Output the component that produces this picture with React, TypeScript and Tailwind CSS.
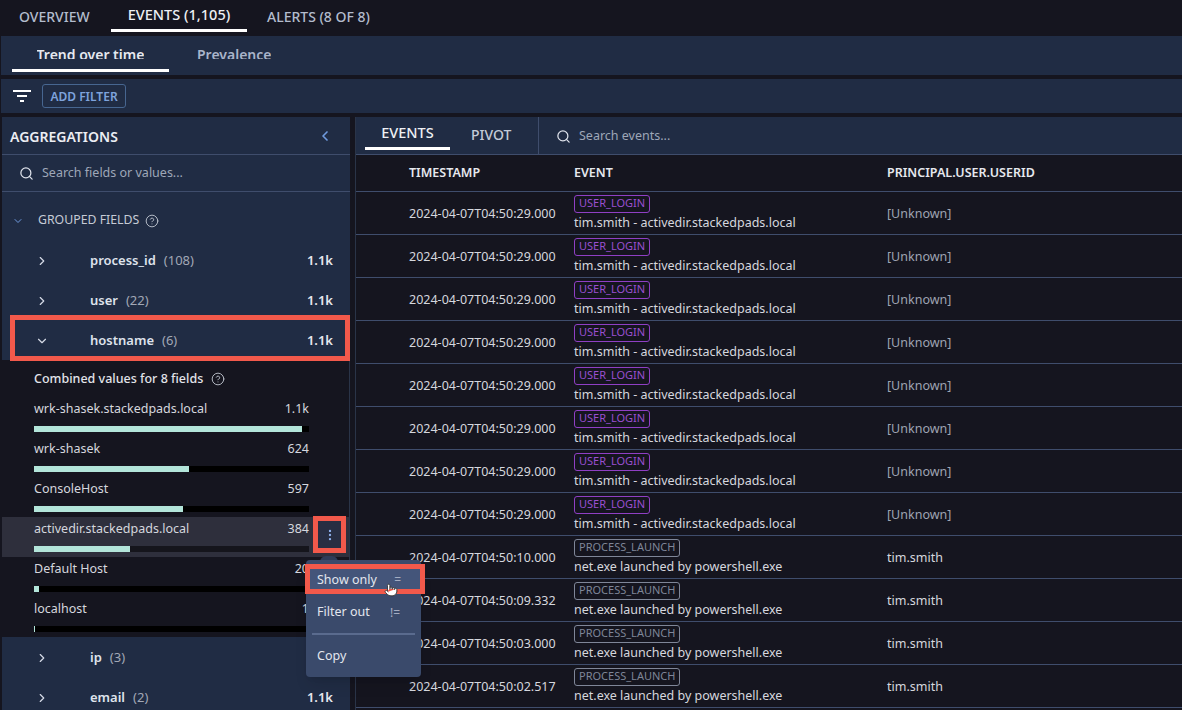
import React from "react";
import { ChevronRight, ChevronDown, ChevronLeft, Search, CircleHelp, EllipsisVertical, Pointer } from "lucide-react";

const font = { fontFamily: '"Noto Sans", sans-serif' };

type FieldProps = { name: string; count: number; open?: boolean; total?: string };
function FieldRow({ name, count, open, total = "1.1k" }: FieldProps) {
  return (
    <div className="flex h-10 items-center pl-[33px] pr-[17px] pt-[1px] text-[13px]">
      <span className="w-[55px] text-[#d5dae6]">
        {open ? <ChevronDown size={14} strokeWidth={2} /> : <ChevronRight size={14} strokeWidth={2} />}
      </span>
      <span className="font-semibold text-[#dfe3ec]">{name}</span>
      <span className="ml-[8px] text-[#a2a8b6]">({count})</span>
      <span className="ml-auto font-semibold text-[#e6e8ee]">{total}</span>
    </div>
  );
}

type ValueProps = { name: string; count: string; pct: number; hover?: boolean };
function ValueRow({ name, count, pct, hover }: ValueProps) {
  return (
    <div className={`h-10 pl-[32px] pr-[40px] pt-[1px] ${hover ? "bg-[#2e2f3c]" : ""}`}>
      <div className="flex h-[28px] items-start justify-between pt-[1px] text-[12.5px] leading-[20px] text-[#d5d7de]">
        <span>{name}</span>
        <span>{count}</span>
      </div>
      <div className={`h-[6px] ${hover ? "bg-[#15151c]" : "bg-black"}`}>
        <div className="h-full bg-[#b3e5da]" style={{ width: `${pct}%` }} />
      </div>
    </div>
  );
}

type EventRow = { ts: string; type: string; text: string; user: string };
const login = "tim.smith - activedir.stackedpads.local";
const launch = "net.exe launched by powershell.exe";
const t = "2024-04-07T04:50:29.000";
const rows: EventRow[] = [
  ...Array.from({ length: 8 }, () => ({ ts: t, type: "USER_LOGIN", text: login, user: "[Unknown]" })),
  { ts: "2024-04-07T04:50:10.000", type: "PROCESS_LAUNCH", text: launch, user: "tim.smith" },
  { ts: "2024-04-07T04:50:09.332", type: "PROCESS_LAUNCH", text: launch, user: "tim.smith" },
  { ts: "2024-04-07T04:50:03.000", type: "PROCESS_LAUNCH", text: launch, user: "tim.smith" },
  { ts: "2024-04-07T04:50:02.517", type: "PROCESS_LAUNCH", text: launch, user: "tim.smith" },
];

export default function App() {
  return (
    <div style={font} className="flex h-[710px] w-[1182px] flex-col overflow-hidden bg-[#15151f] text-white">
      <div className="flex h-9 shrink-0 text-[14px] font-medium">
        <div className="flex h-[32px] w-[111px] items-center pl-[19px] text-[#b3bccd]">OVERVIEW</div>
        <div className="flex h-[32px] w-[136px] items-center justify-center border-b-[3px] border-white pt-[1px] text-[14.5px] text-[#eef0f4]">EVENTS (1,105)</div>
        <div className="flex h-[32px] items-center pl-[20px] text-[#b3bccd]">ALERTS (8 OF 8)</div>
      </div>

      <div className="ml-[1px] flex h-[39px] shrink-0 items-start bg-[#202c44] pl-[11px] text-[14px] font-semibold">
        <div className="flex h-[36px] w-[157px] items-start justify-center overflow-hidden border-b-[3px] border-white pt-[9px] text-[#e6e9f0]">
          <span className="block h-[14px] overflow-hidden leading-[20px]">Trend over time</span>
        </div>
        <div className="ml-[28px] flex h-[36px] items-start overflow-hidden pt-[9px] text-[#a9b4ca]">
          <span className="block h-[14px] overflow-hidden leading-[20px]">Prevalence</span>
        </div>
      </div>

      <div className="ml-[1px] mt-[4px] flex h-[34px] shrink-0 items-center gap-[11px] bg-[#202c44] pl-[12px]">
        <svg width="18" height="14" viewBox="0 0 18 14" fill="none" stroke="#fff" strokeWidth="2">
          <path d="M0 2H18M4 7H14M7 12H11" />
        </svg>
        <div className="flex h-[24px] w-[84px] items-center justify-center rounded-[3px] border border-[#476690] pt-[1px] text-[12px] font-semibold text-[#7ea3dc]">
          ADD FILTER
        </div>
      </div>

      <div className="mt-[4px] flex min-h-0 flex-1">
        <aside className="relative ml-[2px] w-[348px] shrink-0 bg-[#202c44]">
          <div className="flex h-[38px] items-center justify-between border-b border-[#3f4d6c] pl-[8px] pr-[17px] pt-[1px]">
            <span className="text-[14px] font-semibold text-[#eceef3]">AGGREGATIONS</span>
            <ChevronLeft size={16} strokeWidth={2.5} className="text-[#6f9ade]" />
          </div>
          <div className="flex h-[37px] items-center gap-[8px] border-b border-[#3f4d6c] pl-[17px] text-[12.5px] text-[#9ea7b8]">
            <Search size={15} strokeWidth={2} className="text-[#dfe3ec]" />
            <span>Search fields or values...</span>
          </div>
          <div className="flex h-[48px] items-center pl-[10px] pt-[9px] text-[12.3px] text-[#c6cbd6]">
            <ChevronDown size={12} strokeWidth={2} className="mr-[14px] text-[#6f9ade]" />
            <span>GROUPED FIELDS</span>
            <CircleHelp size={14} strokeWidth={1.5} className="ml-[6px] text-[#c6cbd6]" />
          </div>
          <FieldRow name="process_id" count={108} />
          <FieldRow name="user" count={22} />
          <FieldRow name="hostname" count={6} open />
          <div className="h-[277px] border-r border-[#2a3448] bg-[#15151f] pt-[4px]">
            <div className="flex h-[30px] items-center gap-[8px] pl-[32px] text-[12.5px] font-medium text-[#e2e4ea]">
              <span>Combined values for 8 fields</span>
              <CircleHelp size={14} strokeWidth={1.5} className="text-[#c6cbd6]" />
            </div>
            <div className="pt-[3px]">
              <ValueRow name="wrk-shasek.stackedpads.local" count="1.1k" pct={97.5} />
              <ValueRow name="wrk-shasek" count="624" pct={56.5} />
              <ValueRow name="ConsoleHost" count="597" pct={54} />
              <ValueRow name="activedir.stackedpads.local" count="384" pct={34.8} hover />
              <ValueRow name="Default Host" count="20" pct={1.8} />
              <ValueRow name="localhost" count="1" pct={0.4} />
            </div>
          </div>
          <FieldRow name="ip" count={3} />
          <FieldRow name="email" count={2} />

          <div className="absolute left-[8px] top-[198px] h-[46px] w-[340px] border-[5px] border-[#f2594b]" />

          <div className="absolute left-[311px] top-[399px] flex h-[37px] w-[33px] items-center justify-center border-[5px] border-[#f2594b] bg-[#282e42]">
            <EllipsisVertical size={14} strokeWidth={2} className="text-[#8fb0ea]" />
          </div>

          <div className="absolute left-[318px] top-[439px] h-[6px] w-[18px] rounded-t-full bg-[#2f3c58]" />
          <div className="absolute left-[304px] top-[443px] h-[117px] w-[115px] rounded-[4px] bg-[#3a4a6b] text-[12.5px] text-[#e3e6ee] shadow-lg">
            <div className="h-[38px]" />
            <div className="flex h-[28px] items-center justify-between pl-[11px] pr-[21px] pt-[1px]">
              <span>Filter out</span>
              <span className="text-[12px] text-[#a4adc2]">!=</span>
            </div>
            <div className="mx-[6px] mt-[7px] h-[2px] bg-[#5a6b8e]" />
            <div className="flex h-[42px] items-center pl-[11px] pt-[1px]">Copy</div>
          </div>

          <div className="absolute left-[303px] top-[447px] flex h-[30px] w-[120px] items-center justify-between border-[5px] border-[#f2594b] bg-[#44557a] pl-[7px] pr-[19px] pt-[2px] text-[12.5px] text-[#e3e6ee]">
            <span>Show only</span>
            <span className="text-[12px] text-[#a4adc2]">=</span>
          </div>
          <Pointer size={14} strokeWidth={1.5} fill="#fff" className="absolute left-[382px] top-[466px] text-[#333]" />
        </aside>

        <main className="ml-[5px] flex min-w-0 flex-1 flex-col border-l border-[#2a3448]">
          <div className="flex h-[38px] shrink-0 border-b border-[#3f4d6c] bg-[#202c44]">
            <div className="flex w-[183px] border-r border-[#3f4d6c] pl-[9px] text-[14px] font-medium">
              <div className="flex h-[33px] w-[85px] items-center justify-center border-b-[3px] border-white pt-[1px] text-[14.5px] text-[#eef0f4]">EVENTS</div>
              <div className="ml-[21px] flex h-[33px] items-center pt-[1px] text-[#c4cbd9]">PIVOT</div>
            </div>
            <div className="flex items-center gap-[8px] pl-[17px] pt-[1px] text-[12.5px] text-[#9ea7b8]">
              <Search size={15} strokeWidth={2} className="text-[#dfe3ec]" />
              <span>Search events...</span>
            </div>
          </div>
          <div className="flex h-[37px] shrink-0 items-center border-b border-[#3f4d6c] pt-[1px] text-[12.5px] font-semibold text-[#e6e8ee]">
            <span className="ml-[53px] w-[165px]">TIMESTAMP</span>
            <span className="w-[313px]">EVENT</span>
            <span>PRINCIPAL.USER.USERID</span>
          </div>
          {rows.map((r, i) => {
            const isLogin = r.type === "USER_LOGIN";
            return (
              <div key={i} className="flex h-[43px] shrink-0 items-center border-b border-[#3f4d6c] text-[12.5px] text-[#d5d7de]">
                <span className="ml-[53px] w-[165px] pt-[2px]">{r.ts}</span>
                <div className="w-[313px]">
                  <span
                    className={`flex h-[18px] w-fit items-center rounded-[3px] border px-[4px] text-[11px] ${
                      isLogin ? "border-[#8f3fc4] text-[#9a4fd0]" : "border-[#7f8698] text-[#7f8698]"
                    }`}
                  >
                    {r.type}
                  </span>
                  <div className="h-[19px] leading-[19px]">{r.text}</div>
                </div>
                <span className={`pt-[2px] ${isLogin ? "text-[#9fa4b2]" : ""}`}>{r.user}</span>
              </div>
            );
          })}
        </main>
      </div>
    </div>
  );
}
